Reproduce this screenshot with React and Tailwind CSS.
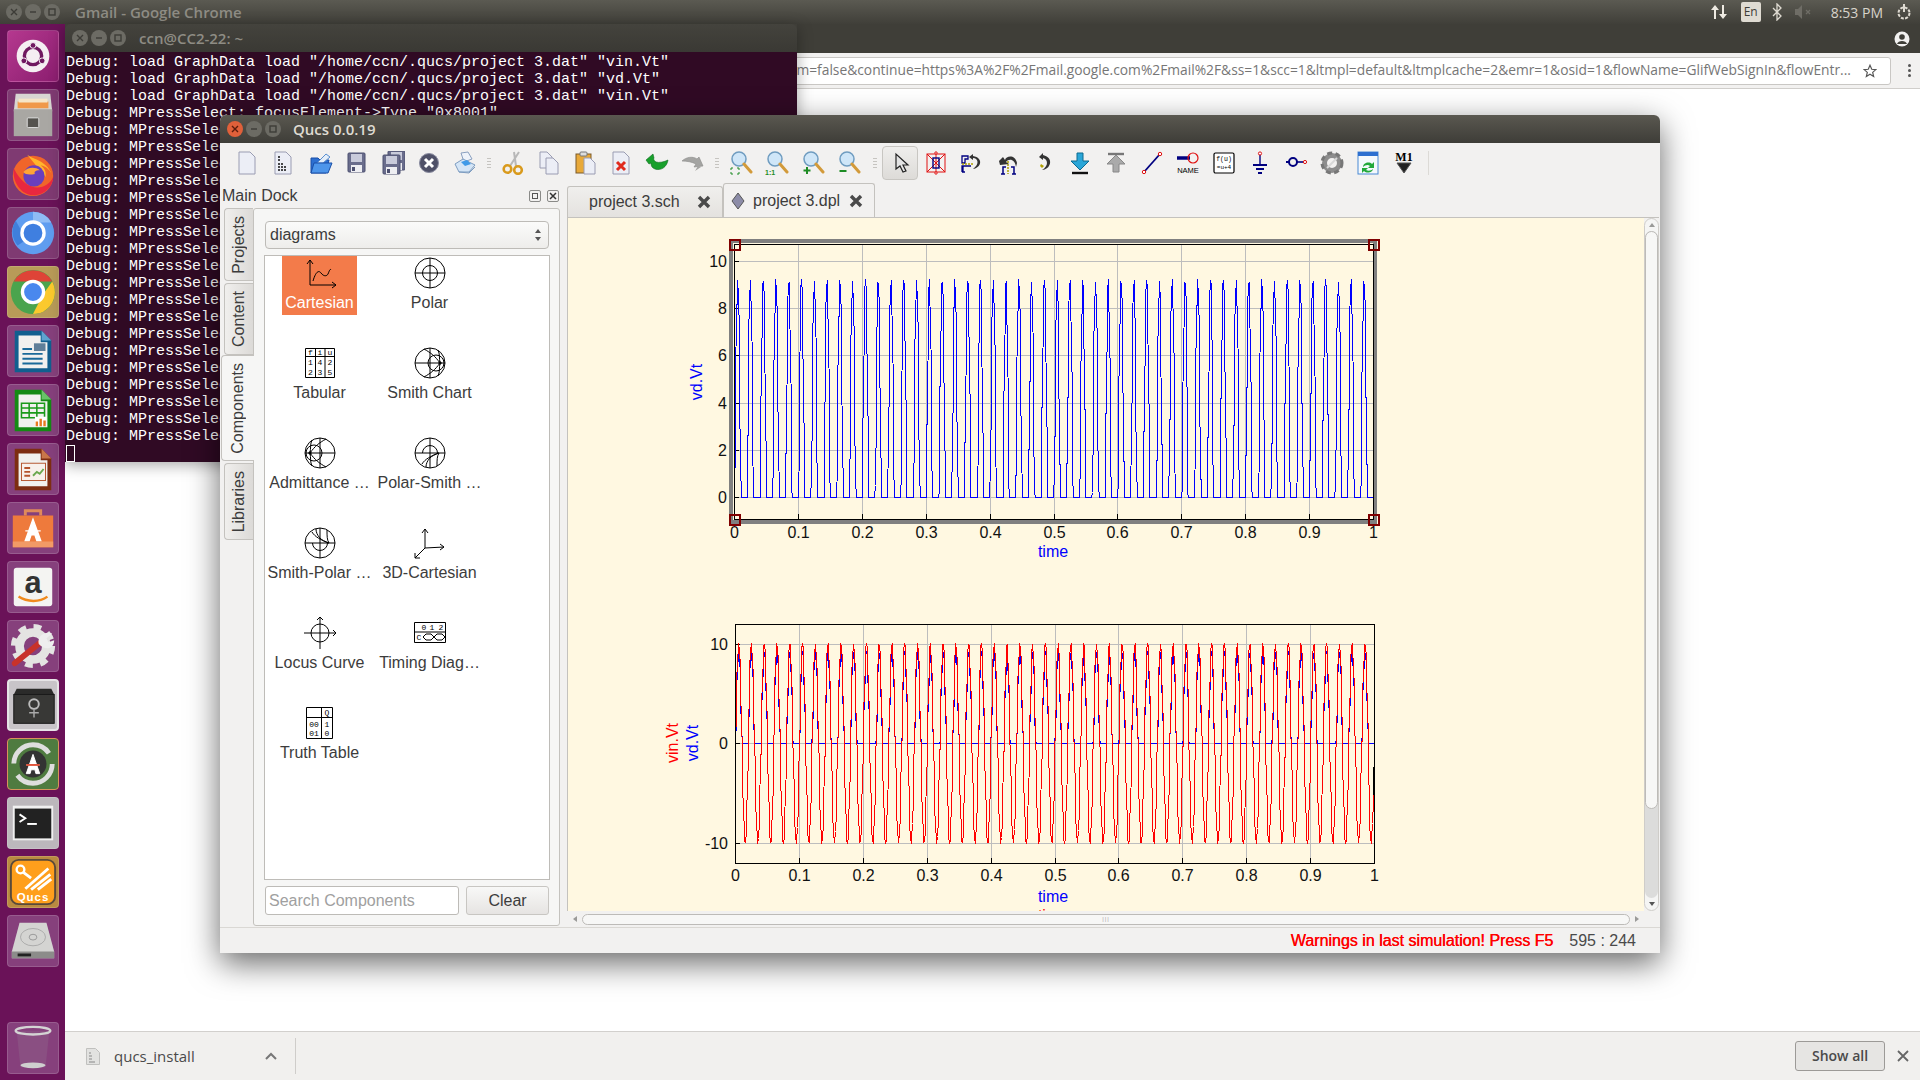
import React from 'react';

// ── Debug output in the terminal behind the Qucs window ──────────────────────
const TERMINAL_LINES = [
  'Debug: load GraphData load "/home/ccn/.qucs/project 3.dat" "vin.Vt"',
  'Debug: load GraphData load "/home/ccn/.qucs/project 3.dat" "vd.Vt"',
  'Debug: load GraphData load "/home/ccn/.qucs/project 3.dat" "vin.Vt"',
  'Debug: MPressSelect: focusElement->Type "0x8001"',
  ...Array(19).fill('Debug: MPressSelect: focusElement->Type "0x8001"'),
];

const URL_TEXT =
  'm=false&continue=https%3A%2F%2Fmail.google.com%2Fmail%2F&ss=1&scc=1&ltmpl=default&ltmplcache=2&emr=1&osid=1&flowName=GlifWebSignIn&flowEntr...';

// ── Launcher icons ───────────────────────────────────────────────────────────
const Tile = ({ bg, ring, children }) => (
  <div className={`w-[52px] h-[52px] rounded-[4px] shrink-0 ${bg} ${ring ?? 'border border-white/15'}`}>
    <svg width="50" height="50" viewBox="0 0 52 52" fill="none">{children}</svg>
  </div>
);

const DocIcon = ({ edge, fold, children }) => (
  <>
    <path d="M7 5h28l10 10v33H7z" fill={edge} />
    <path d="M35 5l10 10H35z" fill={fold} />
    <path d="M11 10h23v7h7v27H11z" fill="#f1f1ef" />
    {children}
  </>
);

const Launcher = () => (
  <div className="w-[65px] shrink-0 bg-[#6a1258] flex flex-col items-center gap-[7px] pt-[6px] pb-[6px]">
    <Tile bg="bg-gradient-to-br from-[#b5388f] to-[#8b1d6f]">
      <circle cx="26" cy="26" r="17" fill="#f4eef2" />
      <circle cx="26" cy="26" r="9" stroke="#6f1860" strokeWidth="3.5" />
      <circle cx="26" cy="15" r="3" fill="#6f1860" stroke="#f4eef2" />
      <circle cx="16.5" cy="31" r="3" fill="#6f1860" stroke="#f4eef2" />
      <circle cx="35.5" cy="31" r="3" fill="#6f1860" stroke="#f4eef2" />
    </Tile>
    <Tile bg="bg-[#7f3a72]">
      <path d="M8 4h36l2 18H6z" fill="#d8d6d2" />
      <path d="M10 12h32v7H10z" fill="#f0994a" />
      <path d="M11 9h30v4H11z" fill="#f6e6c8" />
      <rect x="6" y="20" width="40" height="28" fill="#a9a7a3" />
      <rect x="20" y="29" width="12" height="10" rx="1" fill="#55534f" stroke="#ddd" />
    </Tile>
    <Tile bg="bg-[#7f3a72]">
      <circle cx="26" cy="28" r="21" fill="#f0652a" />
      <path d="M20 6c6 5 22 6 27 24-2-8-8-12-13-13 4 3 6 7 5 12z" fill="#ffb52c" />
      <path d="M6 20c-2 14 8 28 20 28 14 0 21-11 21-19-6 14-28 18-41-9z" fill="#e9283f" />
      <circle cx="27" cy="28" r="11" fill="#6a3fbd" />
      <path d="M16 24c4-5 12-6 17-2-5 0-6 2-5 4-5 1-10 1-12-2z" fill="#ffa436" />
    </Tile>
    <Tile bg="bg-[#7f3a72]">
      <circle cx="26" cy="26" r="22" fill="#5f9df0" />
      <path d="M26 4a22 22 0 0 1 19 11H26z" fill="#8fbcf5" />
      <path d="M8 13l11 20 -9 6a22 22 0 0 1-2-26z" fill="#3f7fdc" />
      <circle cx="26" cy="26" r="11.5" fill="#3f7fe0" stroke="#fff" strokeWidth="3.5" />
    </Tile>
    <Tile bg="bg-[#b89b58]">
      <circle cx="26" cy="26" r="23" fill="#4aa44d" />
      <path d="M6 15a23 23 0 0 1 40 0H26z" fill="#de4437" />
      <path d="M46 15a23 23 0 0 1-20 34l10-20z" fill="#fbc92d" />
      <circle cx="26" cy="26" r="11" fill="#4a88ee" stroke="#fff" strokeWidth="3.5" />
    </Tile>
    <Tile bg="bg-[#86407c]">
      <DocIcon edge="#115f8f" fold="#5ea4cf">
        <path d="M15 24h10M15 29h21M15 34h21M15 39h21" stroke="#1a6a9a" strokeWidth="2" />
        <rect x="27" y="18" width="12" height="8" fill="#5f7f99" />
      </DocIcon>
    </Tile>
    <Tile bg="bg-[#86407c]">
      <DocIcon edge="#148a14" fold="#68c468">
        <path d="M14 19h24v15H14zM14 24h24M14 29h24M22 19v15M30 19v15" stroke="#1a9a1a" strokeWidth="1.6" />
        <rect x="28" y="33" width="12" height="10" fill="#fff" />
        <path d="M30 43v-5M34 43v-8M38 43v-6" stroke="#e87a20" strokeWidth="2.5" />
      </DocIcon>
    </Tile>
    <Tile bg="bg-[#86407c]">
      <DocIcon edge="#7d2d12" fold="#c9764a">
        <rect x="14" y="20" width="25" height="18" fill="#f8f1ec" stroke="#b4532c" />
        <path d="M17 25h6M17 29h6M17 33h6" stroke="#b4532c" strokeWidth="2" />
        <path d="M26 33l4-4 3 2 4-5" stroke="#6aa84f" strokeWidth="2" />
      </DocIcon>
    </Tile>
    <Tile bg="bg-[#86407c]">
      <path d="M18 13v-5h16v5" stroke="#e08a5a" strokeWidth="3" />
      <path d="M5 13h42v33H5z" fill="#ee7a3c" />
      <path d="M5 40h42v6H5z" fill="#f29a66" />
      <path d="M26 17l-8 22h4l2-6h4l2 6h4zM18 29h16" fill="#fff" stroke="#fff" strokeWidth="1.5" />
    </Tile>
    <Tile bg="bg-[#86407c]">
      <rect x="6" y="6" width="40" height="40" rx="3" fill="#f4f4f2" />
      <text x="26" y="32" textAnchor="middle" fontFamily="Liberation Sans, sans-serif" fontWeight="700" fontSize="32" fill="#333">a</text>
      <path d="M11 36c9 6 22 6 30 0" stroke="#f08a1d" strokeWidth="2.5" />
    </Tile>
    <Tile bg="bg-[#86407c]">
      <circle cx="26" cy="26" r="14" stroke="#e4e4e2" strokeWidth="9" />
      <circle cx="26" cy="26" r="20" stroke="#e4e4e2" strokeWidth="6" strokeDasharray="8 7.7" />
      <path d="M7 44L34 22" stroke="#c8322a" strokeWidth="6" strokeLinecap="round" />
      <path d="M32 24c-2-8 6-14 14-11l-6 5 2 4 6-2c0 8-8 12-16 4z" fill="#eee" />
    </Tile>
    <Tile bg="bg-[#c8c4c8]" ring="border-2 border-[#e6e4e6]">
      <path d="M8 8h36l3 6v30H5V14z" fill="#2b2b2a" />
      <rect x="5" y="14" width="42" height="30" fill="#383836" stroke="#1a1a1a" />
      <circle cx="26" cy="24" r="5" fill="none" stroke="#bbb" strokeWidth="2" />
      <path d="M26 29v9M21 33h10" stroke="#aaa" strokeWidth="1.5" />
    </Tile>
    <Tile bg="bg-[#4f7b40]" ring="border border-[#d9925a]">
      <circle cx="26" cy="26" r="20" stroke="#dedede" strokeWidth="5" strokeDasharray="50 13" />
      <circle cx="26" cy="26" r="14" fill="#333" />
      <path d="M26 16l-7 20h4l1-4h4l1 4h4zM19 27h14" fill="#fff" stroke="#fff" />
      <path d="M19 27h14" stroke="#e0533a" strokeWidth="2" />
    </Tile>
    <Tile bg="bg-[#bcb8bc]">
      <rect x="5" y="8" width="42" height="36" fill="#f0f0f0" />
      <rect x="7" y="11" width="38" height="31" fill="#222" />
      <path d="M12 17l6 4-6 4" stroke="#fff" strokeWidth="2" />
      <path d="M20 27h10" stroke="#fff" strokeWidth="2" />
    </Tile>
    <Tile bg="bg-[#b98a40]">
      <rect x="3" y="3" width="46" height="46" rx="8" fill="#ff9f1c" stroke="#5a4a3a" strokeWidth="2" />
      <circle cx="13" cy="13" r="4" stroke="#fff" strokeWidth="2.5" />
      <path d="M16 16l8 6M18 33L42 12M24 34L44 18M31 34l14-11" stroke="#fff" strokeWidth="3" />
      <text x="26" y="46" textAnchor="middle" fontFamily="Liberation Sans, sans-serif" fontWeight="700" fontSize="12" letterSpacing="1" fill="#fff">Qucs</text>
    </Tile>
    <Tile bg="bg-[#86407c]">
      <path d="M12 7h28l8 30v7H4v-7z" fill="#d4d4d2" />
      <path d="M4 37h44v7H4z" fill="#8c8c8a" />
      <path d="M10 39h14v3H10z" fill="#222" />
      <ellipse cx="26" cy="22" rx="13" ry="9" stroke="#aaa" />
      <ellipse cx="26" cy="22" rx="4" ry="3" stroke="#999" />
    </Tile>
    <div className="mt-auto">
      <Tile bg="bg-[#86407c]">
        <path d="M9 8h34l-4 38H13z" fill="#8a4f82" />
        <ellipse cx="26" cy="8" rx="18" ry="4" stroke="#d4d4d4" strokeWidth="2.5" />
        <ellipse cx="26" cy="44" rx="13" ry="3" fill="#cfcfcf" />
      </Tile>
    </div>
  </div>
);

// ── Window decoration ────────────────────────────────────────────────────────
const WinBtn = ({ kind, red }) => (
  <div className={`w-[16px] h-[16px] rounded-full flex items-center justify-center ${red ? 'bg-[#e0603a]' : 'bg-[#6c6b64]'}`}>
    <svg width="8" height="8" viewBox="0 0 8 8" stroke={red ? '#5a1c0c' : '#3d3c37'} strokeWidth="1.4" fill="none">
      {kind === 'x' && <path d="M1 1l6 6M7 1L1 7" />}
      {kind === 'min' && <path d="M1 4h6" />}
      {kind === 'max' && <rect x="1" y="1" width="6" height="6" />}
    </svg>
  </div>
);

const WinBtns = ({ red, gap }) => (
  <div className={`flex items-center ${gap}`}>
    <WinBtn kind="x" red={red} />
    <WinBtn kind="min" />
    <WinBtn kind="max" />
  </div>
);

// ── Qucs toolbar icons ───────────────────────────────────────────────────────
const Ic = ({ children }) => (
  <div className="w-9 flex justify-center">
    <svg width="24" height="24" viewBox="0 0 24 24" fill="none">{children}</svg>
  </div>
);

const Page = ({ x = 4, y = 1, w = 16, h = 22 }) => (
  <path d={`M${x} ${y}h${w - 5}l5 5v${h - 5}h-${w}z`} fill="#eceef6" stroke="#9a9cb2" />
);

const Handle = ({ w }) => (
  <div className={`${w} flex flex-col gap-[2px] items-center`}>
    <span className="w-[4px] h-px bg-[#c6c4c0]" />
    <span className="w-[4px] h-px bg-[#c6c4c0]" />
    <span className="w-[4px] h-px bg-[#c6c4c0]" />
    <span className="w-[4px] h-px bg-[#c6c4c0]" />
  </div>
);

const Floppy = ({ dx = 0, dy = 0 }) => (
  <g transform={`translate(${dx} ${dy})`}>
    <rect x="3" y="2" width="17" height="19" rx="1" fill="#6a6d8c" stroke="#4d5070" />
    <rect x="6" y="3" width="11" height="8" fill="#c9cbdb" />
    <rect x="6" y="14" width="11" height="7" fill="#eeeef2" />
    <rect x="7" y="16" width="3" height="4" fill="#4d5070" />
  </g>
);

const ZoomIc = ({ children }) => (
  <Ic>
    <circle cx="10" cy="8" r="7" fill="#cfe6f8" stroke="#6f9cc0" strokeWidth="1.5" />
    <path d="M15 13l7 8" stroke="#d29a3a" strokeWidth="3" strokeLinecap="round" />
    {children}
  </Ic>
);

const Toolbar = () => (
  <div className="h-[42px] shrink-0 flex items-center pl-[9px] pb-[2px]">
    <Ic><Page /></Ic>
    <Ic>
      <Page />
      <path d="M7 6h2M7 9h2M7 13h5M7 16h9M7 19h9" stroke="#111" strokeWidth="1.3" strokeDasharray="2 1" />
    </Ic>
    <div className="w-[2px]" />
    <Ic>
      <path d="M2 7h7l2 2h9l-3 13H2z" fill="#2d6fd0" stroke="#1a4fa8" />
      <path d="M8 12L17 3l4 3-7 6z" fill="#e4eef9" stroke="#5a8fd0" />
      <path d="M5 12h18l-4 10H2z" fill="#4d95ea" stroke="#1a4fa8" />
    </Ic>
    <Ic><Floppy /></Ic>
    <Ic><Floppy dx="4" dy="-2" /><Floppy dx="-1" dy="2" /></Ic>
    <Ic>
      <circle cx="12" cy="12" r="9.5" fill="#4f5168" stroke="#8a8ca0" />
      <path d="M8 8l8 8M16 8l-8 8" stroke="#fff" strokeWidth="3" />
    </Ic>
    <Ic>
      <path d="M8 2l7-1 4 7-8 3z" fill="#eef3fa" stroke="#8aa0c0" />
      <path d="M2 13l8-5 12 6-6 7H6z" fill="#d4e5f6" stroke="#7d9cc0" />
      <path d="M8 11l6-2 4 4-6 2z" fill="#3f9ae8" />
      <path d="M6 21l10 1 6-6" stroke="#7d9cc0" />
    </Ic>
    <Handle w="w-[12px]" />
    <Ic>
      <path d="M9 15L18 1M15 15L13 1" stroke="#b8b8b8" strokeWidth="2" />
      <circle cx="6.5" cy="18" r="3.8" stroke="#d99a1c" strokeWidth="2.6" />
      <circle cx="17" cy="19" r="3.8" stroke="#d99a1c" strokeWidth="2.6" />
    </Ic>
    <Ic><Page x={3} y={1} w={12} h={16} /><Page x={9} y={7} w={12} h={16} /></Ic>
    <Ic>
      <rect x="3" y="3" width="15" height="19" fill="#e8a93a" stroke="#7a5a2a" />
      <rect x="7" y="1" width="7" height="4" rx="1" fill="#ddd" stroke="#777" />
      <Page x={11} y={7} w={11} h={16} />
    </Ic>
    <Ic>
      <Page />
      <path d="M8 11l8 8M16 11l-8 8" stroke="#e02a1e" strokeWidth="3" />
    </Ic>
    <Ic>
      <path d="M1 9l7-6 1 4c-1 1 0 3 2 4 3 1 8 0 12-2-1 7-7 11-13 9-3-1-4-3-4-6l-2 1z" fill="#18a02c" stroke="#0c6a1c" strokeWidth="0.6" />
    </Ic>
    <Ic>
      <path d="M1 10c4-4 11-5 15-2l2-2 4 9-9 1 2-3c-4-2-9-3-14-3z" fill="#a4a4a2" stroke="#8a8a88" strokeWidth="0.6" />
      <path d="M14 20l3-5 3 1z" fill="#a4a4a2" />
    </Ic>
    <Handle w="w-[12px]" />
    <ZoomIc><path d="M2 19v-2h2M8 17h2v2M2 21v2h2M8 23h2v-2" stroke="#1e8c24" /></ZoomIc>
    <ZoomIc><text x="0" y="24" fontSize="7" fontWeight="700" fontFamily="Liberation Sans, sans-serif" fill="#1e8c24">1:1</text></ZoomIc>
    <ZoomIc><path d="M6 16v7M2.5 19.5h7" stroke="#1e8c24" strokeWidth="2" /></ZoomIc>
    <ZoomIc><path d="M2.5 20h7" stroke="#1e8c24" strokeWidth="2" /></ZoomIc>
    <Handle w="w-[15px]" />

    <div className="w-9 h-[34px] flex items-center justify-center rounded-[4px] border border-[#c8c6c2] bg-gradient-to-b from-[#efeeec] to-[#dddbd8]">
      <svg width="24" height="24" viewBox="0 0 24 24" fill="none">
        <path d="M8 3v15l4-3 3 6 3-1-3-6h5z" fill="#e4e4e4" stroke="#222" strokeWidth="1.2" />
      </svg>
    </div>
    <Ic>
      <rect x="3" y="3" width="18" height="18" stroke="#e01010" />
      <path d="M3 3l18 18M21 3L3 21M12 1v22" stroke="#e01010" />
      <rect x="9" y="7" width="6" height="10" stroke="#000080" strokeWidth="1.4" />
      <circle cx="12" cy="2" r="1.2" stroke="#e01010" fill="#fff" />
      <circle cx="12" cy="22" r="1.2" stroke="#e01010" fill="#fff" />
    </Ic>
    <Ic>
      <path d="M2 5h6v3H5v4h-3zM2 21v-6h9M5 21h-3M3 15v6" stroke="#000080" strokeWidth="1.3" />
      <path d="M2 13h12" stroke="#b0a000" strokeWidth="1.5" strokeDasharray="2 1" />
      <path d="M13 3l-4 3 4 3V7c5 0 7 6 0 11 8-1 11-11 0-13z" fill="#333" />
    </Ic>
    <Ic>
      <path d="M7 23v-7h3M18 23v-7h-3M5 23h4M16 23h4" stroke="#000080" strokeWidth="1.5" />
      <path d="M12 10v13" stroke="#b0a000" strokeWidth="1.5" strokeDasharray="2 1" />
      <path d="M3 10l4-4 2 3c1-4 10-6 12 3l-1 4c-1-8-7-9-10-5l3 2-9 1z" fill="#333" />
    </Ic>
    <Ic>
      <path d="M11 2L7 6l4 3V7c5 1 6 8-1 12 8 0 13-12 1-15z" fill="#333" />
      <path d="M9 13l3 2-2 2-2-2z" fill="#b0a000" />
    </Ic>
    <Ic>
      <path d="M9 2h6v8h6l-9 9-9-9h6z" fill="#2aa6d8" stroke="#0d6a90" />
      <path d="M4 22h16" stroke="#111" strokeWidth="2.4" />
    </Ic>
    <Ic>
      <path d="M4 3h16" stroke="#777" strokeWidth="2.4" />
      <path d="M9 21h6v-8h6l-9-9-9 9h6z" fill="#aaa" stroke="#888" />
    </Ic>
    <Ic>
      <path d="M4 21L20 3" stroke="#000080" strokeWidth="1.8" />
      <circle cx="4" cy="21" r="1.7" fill="#fff" stroke="#e01010" />
      <circle cx="20" cy="3" r="1.7" fill="#fff" stroke="#e01010" />
    </Ic>
    <Ic>
      <path d="M1 7h13" stroke="#000080" strokeWidth="3.5" />
      <circle cx="17" cy="7" r="5" fill="none" stroke="#e01010" strokeWidth="1.2" />
      <text x="12" y="22" textAnchor="middle" fontSize="7.5" fontFamily="Liberation Sans, sans-serif" fill="#000">NAME</text>
    </Ic>
    <Ic>
      <rect x="2" y="2" width="20" height="20" rx="1.5" fill="#fff" stroke="#000" strokeWidth="1.2" />
      <text x="12" y="10" textAnchor="middle" fontSize="6.5" fontFamily="Liberation Mono, monospace" fill="#000">f(u)</text>
      <text x="12" y="18" textAnchor="middle" fontSize="6" fontFamily="Liberation Mono, monospace" fill="#000">=u+4</text>
    </Ic>
    <Ic>
      <path d="M12 3v11" stroke="#000080" strokeWidth="1.4" />
      <circle cx="12" cy="2.5" r="1.6" fill="#fff" stroke="#e01010" />
      <path d="M5 14h14M8 18h8M10 22h4" stroke="#000080" strokeWidth="2" />
    </Ic>
    <Ic>
      <circle cx="9" cy="11" r="4" stroke="#000080" strokeWidth="2" />
      <path d="M13 11h7" stroke="#000080" strokeWidth="1.6" />
      <path d="M2 11h3" stroke="#000080" strokeWidth="2" />
      <circle cx="21" cy="11" r="1.6" fill="#fff" stroke="#e01010" />
    </Ic>
    <Ic>
      <circle cx="12" cy="12" r="7.5" stroke="#8d8d8d" strokeWidth="5" />
      <circle cx="12" cy="12" r="10" stroke="#777" strokeWidth="3" strokeDasharray="5 3.4" />
      <path d="M7 17L17 7" stroke="#d8d8d8" strokeWidth="2" />
    </Ic>
    <Ic>
      <rect x="2" y="1" width="20" height="22" fill="#f4f8fc" stroke="#4a8ad4" />
      <rect x="2" y="1" width="20" height="4" fill="#2d6fd0" />
      <path d="M7 16c0-4 6-6 9-3l2-2v6h-6l2-2c-2-2-5-1-7 1z" fill="#22a83a" />
      <path d="M17 18c0 3-6 5-9 2l-2 2v-5h6l-2 2c2 1 5 1 7-1z" fill="#22a83a" />
    </Ic>
    <Ic>
      <text x="12" y="10" textAnchor="middle" fontSize="12" fontWeight="700" fontFamily="Liberation Serif, serif" fill="#000">M1</text>
      <path d="M5 12h14l-7 10z" fill="#222" stroke="#555" />
    </Ic>
    <div className="w-px h-[24px] bg-[#dcdad6] ml-[6px]" />
  </div>
);

// ── Component palette icons ──────────────────────────────────────────────────
const Sv = ({ children }) => (
  <svg width="32" height="32" viewBox="0 0 32 32" fill="none" stroke="#000" strokeWidth="1">{children}</svg>
);

const Disc = () => (
  <>
    <circle cx="16" cy="16" r="15" />
    <path d="M1 16h30" />
  </>
);

const SmithArcs = ({ flip }) => (
  <g transform={flip ? 'rotate(180 16 16)' : undefined}>
    <path d="M16 1v30" />
    <circle cx="22" cy="16" r="8" />
    <path d="M26 16C21 9 17 6 10 2M26 16C21 23 17 26 10 30M26 16C25 11 26 7 24 3M26 16C25 21 26 25 24 29" />
    <circle cx="26" cy="16" r="1.2" fill="#000" />
  </g>
);

const DIAGRAMS = [
  {
    label: 'Cartesian',
    active: true,
    icon: (
      <Sv>
        <path d="M6 3v25h26M3 7l3-4 3 4M28 25l4 3-4 3" />
        <path d="M9 24c2-7 5-12 8-8s6 3 7 1 2-6 3-4" />
      </Sv>
    ),
  },
  { label: 'Polar', icon: <Sv><Disc /><path d="M16 1v30" /><circle cx="16" cy="16" r="7.5" /></Sv> },
  {
    label: 'Tabular',
    icon: (
      <svg width="32" height="32" viewBox="0 0 32 32" fill="none" stroke="#000">
        <path d="M1.5 1.5h29v29h-29zM1.5 9.5h29M11.5 1.5v29M21 1.5v29" />
        <g fontFamily="Liberation Mono, monospace" fontSize="8" fill="#000" stroke="none" textAnchor="middle">
          <text x="6.5" y="8">f</text><text x="16" y="8">i</text><text x="26" y="8">u</text>
          <text x="6.5" y="18">1</text><text x="16" y="18">4</text><text x="26" y="18">2</text>
          <text x="6.5" y="28">2</text><text x="16" y="28">3</text><text x="26" y="28">5</text>
        </g>
      </svg>
    ),
  },
  { label: 'Smith Chart', icon: <Sv><Disc /><SmithArcs /></Sv> },
  { label: 'Admittance …', icon: <Sv><Disc /><SmithArcs flip /></Sv> },
  {
    label: 'Polar-Smith …',
    icon: (
      <Sv>
        <Disc />
        <path d="M16 1v30" />
        <path d="M8.5 16a7.5 7.5 0 0 1 15 0" />
        <path d="M8 27c3-5 9-8 17-11M12 30c0-6 5-12 13-14M23 29c0-6 0-10 2-13" />
      </Sv>
    ),
  },
  {
    label: 'Smith-Polar …',
    icon: (
      <Sv>
        <Disc />
        <path d="M16 1v30" />
        <path d="M8.5 16a7.5 7.5 0 0 0 15 0" />
        <path d="M8 5c3 5 9 8 17 11M12 2c0 6 5 12 13 14M23 3c0 6 0 10 2 13" />
      </Sv>
    ),
  },
  {
    label: '3D-Cartesian',
    icon: (
      <Sv>
        <path d="M11 2v19l19-1M11 21L1 31M8 6l3-4 3 4M26 17l4 3-4 3M1 26v5h5" />
      </Sv>
    ),
  },
  {
    label: 'Locus Curve',
    icon: (
      <Sv>
        <circle cx="16" cy="16" r="9" />
        <path d="M16 0v32M0 16h32M13 3l3-3 3 3M29 13l3 3-3 3" />
      </Sv>
    ),
  },
  {
    label: 'Timing Diag…',
    icon: (
      <svg width="32" height="22" viewBox="0 0 32 22" fill="none" stroke="#000">
        <path d="M.5.5h31v20H.5zM.5 10h31" />
        <g fontFamily="Liberation Mono, monospace" fontSize="8" fill="#000" stroke="none" textAnchor="middle">
          <text x="10" y="8">0</text><text x="18" y="8">1</text><text x="27" y="8">2</text><text x="5" y="18">C</text>
        </g>
        <path d="M9 15l3-3h5l3 3-3 3h-5zM20 15l3-3h5l3 3-3 3h-5z" />
      </svg>
    ),
  },
  {
    label: 'Truth Table',
    icon: (
      <svg width="28" height="32" viewBox="0 0 28 32" fill="none" stroke="#000">
        <path d="M.5.5h26v31H.5zM.5 10.5h26M15.5.5v31" />
        <g fontFamily="Liberation Mono, monospace" fontSize="8" fill="#000" stroke="none" textAnchor="middle">
          <text x="21" y="8">Q</text>
          <text x="8" y="20">00</text><text x="21" y="20">1</text>
          <text x="8" y="29">01</text><text x="21" y="29">0</text>
        </g>
      </svg>
    ),
  },
];

const DiagramItem = ({ item }) => (
  <div className="h-[90px] flex flex-col items-center">
    <div className={`w-[75px] h-[59px] flex flex-col items-center ${item.active ? 'bg-[#f37b4a]' : ''}`}>
      <div className="h-[33px] pt-px flex items-center justify-center">{item.icon}</div>
      <div className={`mt-[2px] h-6 leading-6 whitespace-nowrap ${item.active ? 'text-white' : 'text-[#3c3c3c]'}`}>
        {item.label}
      </div>
    </div>
  </div>
);

const DOCK_TABS = [
  { label: 'Projects', h: 'h-[73px]' },
  { label: 'Content', h: 'h-[72px]', mt: 'mt-[2px]' },
  { label: 'Components', h: 'h-[106px]', active: true },
  { label: 'Libraries', h: 'h-[77px]', mt: 'mt-[2px]' },
];

const MainDock = () => (
  <div className="w-[342px] shrink-0 flex flex-col">
    <div className="h-[23px] flex items-center justify-between pl-[2px] pr-px pb-px text-[#3c3c3c]">
      <span>Main Dock</span>
      <div className="flex gap-[6px] pr-[2px]">
        <span className="w-[12px] h-[12px] rounded-[2px] border border-[#8a8a88] flex items-center justify-center">
          <span className="w-[6px] h-[6px] border border-[#555]" />
        </span>
        <span className="w-[12px] h-[12px] rounded-[2px] border border-[#8a8a88] flex items-center justify-center">
          <svg width="8" height="8" viewBox="0 0 8 8" stroke="#333" strokeWidth="1.5"><path d="M1 1l6 6M7 1L1 7" /></svg>
        </span>
      </div>
    </div>
    <div className="flex flex-1 pl-[3px] pr-[2px] pb-px">
      <div className="w-[30px] shrink-0 flex flex-col">
        {DOCK_TABS.map(tab => (
          <div
            key={tab.label}
            className={`${tab.h} ${tab.mt ?? ''} flex items-center justify-center border border-r-0 border-[#c4c2be] rounded-l-[4px] ${
              tab.active ? 'bg-[#f6f6f5] -ml-[2px] relative z-10 -mr-px' : 'bg-gradient-to-r from-[#f0efed] to-[#dcdad7] ml-px'
            }`}
          >
            <span className="[writing-mode:vertical-rl] rotate-180 text-[#3c3c3c]">{tab.label}</span>
          </div>
        ))}
      </div>
      <div className="flex-1 bg-[#f6f6f5] border border-[#c4c2be] rounded-[3px] pl-[10px] pr-[9px] pt-[12px] pb-[10px] flex flex-col">
        <div className="mx-px h-[28px] shrink-0 rounded-[4px] border border-[#bdbbb7] bg-gradient-to-b from-[#fbfbfa] to-[#eeedeb] flex items-center justify-between pl-[4px] pr-[6px] text-[#3c3c3c]">
          <span>diagrams</span>
          <svg width="8" height="14" viewBox="0 0 8 14" fill="#555"><path d="M4 1l3 4H1zM4 13l3-4H1z" /></svg>
        </div>
        <div className="mt-[6px] flex-1 bg-white border border-[#bebcb8] grid grid-cols-[109px_111px] content-start">
          {DIAGRAMS.map(item => <DiagramItem key={item.label} item={item} />)}
        </div>
        <div className="mt-[6px] mx-px flex gap-[7px]">
          <div className="w-[194px] h-[29px] rounded-[3px] border border-[#bdbbb7] bg-white pl-[3px] leading-[27px] text-[#a0a0a0]">
            Search Components
          </div>
          <div className="w-[83px] h-[29px] rounded-[3px] border border-[#c8c6c2] bg-gradient-to-b from-[#f8f8f7] to-[#e6e4e2] text-center leading-[27px] text-[#3c3c3c]">
            Clear
          </div>
        </div>
      </div>
    </div>
  </div>
);

// ── Plots ────────────────────────────────────────────────────────────────────
// The simulator's time step is not a round fraction of the 50 Hz period,
// which is what gives the uneven staircase on each half wave.
const TIME_STEP = 0.00103;

const trace = (fn, x0, w, y0, scale) => {
  let d = '';
  for (let t = 0, i = 0; t <= 1; t += TIME_STEP, i++) {
    const x = Math.round(x0 + t * w) + 0.5;
    const y = Math.round(y0 - fn(t) * scale) + 0.5;
    d += `${i === 0 ? 'M' : 'L'}${x} ${y}`;
  }
  return d;
};

const vin = t => 10 * Math.sin(2 * Math.PI * 50 * t);
const vd = t => Math.max(0, vin(t) - 0.8);

const XTICKS = ['0', '0.1', '0.2', '0.3', '0.4', '0.5', '0.6', '0.7', '0.8', '0.9', '1'];

const Plot = ({ left, right, top, bottom, yTicks, labelY }) => {
  const w = right - left;
  return (
    <g fontFamily="Liberation Sans, sans-serif" fontSize="16" fill="#111">
      {XTICKS.map((label, i) => {
        const x = Math.round(left + (i * w) / 10) + 0.5;
        return (
          <g key={label}>
            <path d={`M${x} ${top}V${bottom}`} stroke="#bdbdbd" shapeRendering="crispEdges" />
            <path d={`M${x} ${bottom - 5}V${bottom}`} stroke="#000" shapeRendering="crispEdges" />
            <text x={x} y={labelY} textAnchor="middle" stroke="none">{label}</text>
          </g>
        );
      })}
      {yTicks.map(tick => {
        const y = Math.round(tick.y) + 0.5;
        return (
          <g key={tick.label}>
            <path d={`M${left} ${y}H${right}`} stroke="#bdbdbd" shapeRendering="crispEdges" />
            <path d={`M${left} ${y}h5`} stroke="#000" shapeRendering="crispEdges" />
            <text x={left - 7} y={y + 5} textAnchor="end" stroke="none">{tick.label}</text>
          </g>
        );
      })}
    </g>
  );
};

const PlotFrame = ({ left, right, top, bottom }) => (
  <rect x={left + 0.5} y={top + 0.5} width={right - left} height={bottom - top} fill="none" stroke="#000" shapeRendering="crispEdges" />
);

const Handles = ({ pts }) => pts.map(([x, y]) => (
  <rect key={`${x}-${y}`} x={x - 4.5} y={y - 4.5} width="10" height="10" fill="none" stroke="#800000" strokeWidth="2" shapeRendering="crispEdges" />
));

const Canvas = () => (
  <svg width="1077" height="693" viewBox="568 218 1077 693" className="block" fill="none">
    {/* top diagram, selected */}
    <rect x="731" y="241" width="644" height="281" stroke="#808080" strokeWidth="4" shapeRendering="crispEdges" />
    <Plot
      left={734} right={1373} top={244} bottom={519} labelY={538}
      yTicks={[
        { label: '10', y: 260.7 }, { label: '8', y: 307.7 }, { label: '6', y: 355.3 },
        { label: '4', y: 402.6 }, { label: '2', y: 450 }, { label: '0', y: 497.3 },
      ]}
    />
    <path d={trace(vd, 734, 639, 497, 23.66)} stroke="#0000ff" shapeRendering="crispEdges" />
    <PlotFrame left={734} right={1373} top={244} bottom={519} />
    <Handles pts={[[734, 244], [1373, 244], [734, 519], [1373, 519]]} />
    <g fontFamily="Liberation Sans, sans-serif" fontSize="16" fill="#0000ff">
      <text transform="translate(702 382) rotate(-90)" textAnchor="middle">vd.Vt</text>
      <text x="1053" y="557" textAnchor="middle">time</text>
    </g>

    {/* bottom diagram */}
    <Plot
      left={735} right={1374} top={624} bottom={863} labelY={881}
      yTicks={[{ label: '10', y: 644 }, { label: '0', y: 743 }, { label: '-10', y: 843 }]}
    />
    <path d={trace(vd, 735, 639, 743, 10)} stroke="#0000ff" shapeRendering="crispEdges" />
    <path d={trace(vin, 735, 639, 743, 10)} stroke="#ff0000" shapeRendering="crispEdges" />
    <PlotFrame left={735} right={1374} top={624} bottom={863} />
    <path d="M1374 767v28" stroke="#000" strokeWidth="2" />
    <g fontFamily="Liberation Sans, sans-serif" fontSize="16">
      <text transform="translate(678 743) rotate(-90)" textAnchor="middle" fill="#ff0000">vin.Vt</text>
      <text transform="translate(698 743) rotate(-90)" textAnchor="middle" fill="#0000ff">vd.Vt</text>
      <text x="1053" y="902" textAnchor="middle" fill="#0000ff">time</text>
      <text x="1053" y="921" textAnchor="middle" fill="#ff0000">time</text>
    </g>
  </svg>
);

const DocTab = ({ label, active, diamond }) => (
  <div
    className={`shrink-0 flex items-center border border-b-0 border-[#c4c2be] rounded-t-[3px] text-[#3c3c3c] ${
      active ? 'w-[152px] h-[34px] -mt-[2px] bg-[#f2f1f0] pl-[6px]' : 'w-[156px] h-[31px] mt-px bg-gradient-to-b from-[#f0efed] to-[#e4e2df] pl-[21px]'
    }`}
  >
    {diamond && (
      <svg width="16" height="18" viewBox="0 0 16 18" className="mr-[7px]">
        <path d="M8 1l6 8-6 8-6-8z" fill="#8c8ca8" stroke="#555" />
      </svg>
    )}
    <span>{label}</span>
    <svg width="14" height="14" viewBox="0 0 14 14" stroke="#4a4a4a" strokeWidth="3.4" className={active ? 'ml-[9px]' : 'ml-[17px]'}>
      <path d="M2 2l10 10M12 2L2 12" />
    </svg>
  </div>
);

const DocArea = () => (
  <div className="flex-1 min-w-0 flex flex-col">
    <div className="h-[32px] shrink-0 flex">
      <DocTab label="project 3.sch" />
      <DocTab label="project 3.dpl" active diamond />
    </div>
    <div className="flex-1 flex flex-col border-t border-[#c4c2be]">
      <div className="flex flex-1 min-h-0">
        <div className="flex-1 bg-[#fff8e1] border-l border-[#c4c2be] overflow-hidden">
          <Canvas />
        </div>
        {/* vertical scrollbar */}
        <div className="w-[15px] shrink-0 flex flex-col items-center border border-[#cfcdc9] rounded-[8px] bg-[#f5f5f4]">
          <svg width="8" height="12" viewBox="0 0 8 12" fill="#9a9a98" className="shrink-0"><path d="M4 4l3 4H1z" /></svg>
          <div className="w-full flex-1 flex flex-col bg-[#dcdcdb] rounded-[7px]">
            <div className="h-[578px] bg-[#f7f7f6] rounded-[7px] border border-[#bdbbb8]" />
          </div>
          <svg width="8" height="12" viewBox="0 0 8 12" fill="#555" className="shrink-0"><path d="M4 8l3-4H1z" /></svg>
        </div>
      </div>
      <div className="h-[16px] shrink-0 flex items-center pl-[4px] pr-[18px]">
        <svg width="8" height="10" viewBox="0 0 8 10" fill="#9a9a98" className="shrink-0"><path d="M2 5l4-3v6z" /></svg>
        <div className="flex-1 h-[11px] mx-[3px] rounded-[6px] border border-[#bdbbb8] bg-[#f7f7f6] flex items-center justify-center">
          <span className="text-[6px] leading-none text-[#aaa] tracking-[1px]">|||</span>
        </div>
        <svg width="8" height="10" viewBox="0 0 8 10" fill="#9a9a98" className="shrink-0"><path d="M6 5L2 2v6z" /></svg>
      </div>
    </div>
  </div>
);

const QucsWindow = () => (
  <div className="absolute left-[220px] top-[115px] w-[1440px] h-[838px] flex flex-col rounded-t-[6px] bg-[#f2f1f0] font-['Liberation_Sans',sans-serif] text-[16px] shadow-[0_10px_32px_rgba(0,0,0,0.6)]">
    <div className="h-[28px] shrink-0 rounded-t-[6px] bg-gradient-to-b from-[#5a5850] to-[#3e3d38] flex items-center pl-[7px]">
      <WinBtns red gap="gap-[3px]" />
      <span className="ml-[12px] font-['Open_Sans',sans-serif] font-semibold text-[15px] text-[#dfdbd2]">Qucs 0.0.19</span>
    </div>
    <Toolbar />
    <div className="flex-1 flex min-h-0 pr-px">
      <MainDock />
      <div className="w-[5px] shrink-0" />
      <DocArea />
    </div>
    <div className="h-[26px] shrink-0 border-t border-[#dad8d4] flex items-center justify-end pr-[24px]">
      <span className="text-[#ff0000] [text-shadow:0.4px_0_0_#ff0000]">Warnings in last simulation! Press F5</span>
      <span className="ml-[16px] text-[#4a4a4a]">595 : 244</span>
    </div>
  </div>
);

const TerminalWindow = () => (
  <div className="absolute left-[65px] top-[24px] w-[732px] h-[437px] flex flex-col shadow-[0_4px_14px_rgba(0,0,0,0.35)]">
    <div className="h-[28px] shrink-0 bg-gradient-to-b from-[#44433d] to-[#3a3934] rounded-t-[6px] flex items-center pl-[7px]">
      <WinBtns gap="gap-[3px]" />
      <span className="ml-[13px] font-['Open_Sans',sans-serif] font-semibold text-[15px] text-[#8e8c84]">ccn@CC2-22: ~</span>
    </div>
    <div className="flex-1 bg-[#300a24] pl-px pt-[2px] font-['Liberation_Mono',monospace] text-[15px] leading-[17px] text-white whitespace-pre">
      {TERMINAL_LINES.map((line, i) => <div key={i}>{line}</div>)}
      <div className="w-[9px] h-[17px] border border-white" />
    </div>
  </div>
);

// ── Desktop ──────────────────────────────────────────────────────────────────
export default function App() {
  return (
    <div className="relative w-[1920px] h-[1080px] overflow-hidden bg-white flex flex-col">
      {/* panel */}
      <div className="h-[24px] shrink-0 bg-gradient-to-b from-[#5b5a52] to-[#403f39] flex items-center pl-[6px] pr-[7px] font-['Open_Sans',sans-serif]">
        <WinBtns gap="gap-[3px]" />
        <span className="ml-[15px] font-semibold text-[15px] text-[#8f8d85]">Gmail - Google Chrome</span>
        <div className="ml-auto flex items-center text-[#dfdbd2]">
          <svg width="18" height="18" viewBox="0 0 18 18" fill="#eeeae2"><path d="M5 2l4 5H6v9H4V7H1zM13 16l-4-5h3V2h2v9h3z" /></svg>
          <span className="ml-[13px] w-[20px] h-[20px] bg-[#dfdbd2] text-[#3e3d38] rounded-[2px] text-[12px] leading-[20px] text-center">En</span>
          <svg width="12" height="18" viewBox="0 0 12 18" fill="none" stroke="#dfdbd2" strokeWidth="1.3" className="ml-[10px]"><path d="M2 5l8 8-4 4V1l4 4-8 8" /></svg>
          <svg width="20" height="16" viewBox="0 0 20 16" fill="#6f6d66" className="ml-[11px]"><path d="M1 5h3l4-4v14l-4-4H1z" /><path d="M12 6l4 4M16 6l-4 4" stroke="#6f6d66" strokeWidth="1.3" /></svg>
          <span className="ml-[17px] text-[14px] text-[#d8d4cb]">8:53 PM</span>
          <svg width="18" height="18" viewBox="0 0 18 18" fill="none" stroke="#dfdbd2" className="ml-[12px]">
            <circle cx="9" cy="10" r="5.5" strokeWidth="2" strokeDasharray="3 1.3" />
            <path d="M9 1v8" strokeWidth="2" />
          </svg>
        </div>
      </div>

      <div className="flex-1 flex min-h-0">
        <Launcher />

        {/* Chrome */}
        <div className="flex-1 min-w-0 flex flex-col">
          <div className="h-[29px] shrink-0 bg-[#3f3e38] flex items-center justify-end pr-[10px]">
            <svg width="16" height="16" viewBox="0 0 16 16">
              <circle cx="8" cy="8" r="7.5" fill="#f2f1f0" />
              <circle cx="8" cy="6" r="2.8" fill="#3f3e38" />
              <path d="M3 13c1-4 9-4 10 0z" fill="#3f3e38" />
            </svg>
          </div>
          <div className="h-[36px] shrink-0 bg-[#f2f1f0] border-b border-[#d0cecb] flex items-center pr-[9px] font-['Open_Sans',sans-serif]">
            <div className="flex-1 min-w-0 h-[28px] bg-white border border-[#c9c7c4] rounded-[3px] flex items-center justify-end pr-[39px] overflow-hidden">
              <span className="whitespace-nowrap text-[13.8px] text-[#767676]">{URL_TEXT}</span>
            </div>
            <svg width="14" height="14" viewBox="0 0 24 24" fill="none" stroke="#555" strokeWidth="2" className="absolute left-[1863px]">
              <path d="M12 2l3 7 7 .6-5.4 4.8 1.7 7.1L12 17.6l-6.3 3.9 1.7-7.1L2 9.6 9 9z" />
            </svg>
            <div className="ml-[17px] flex flex-col gap-[2px]">
              <span className="w-[3px] h-[3px] rounded-full bg-[#555]" />
              <span className="w-[3px] h-[3px] rounded-full bg-[#555]" />
              <span className="w-[3px] h-[3px] rounded-full bg-[#555]" />
            </div>
          </div>
          <div className="flex-1" />
          {/* download shelf */}
          <div className="h-[49px] shrink-0 bg-[#f1f0ee] border-t border-[#d2d0cd] flex items-center pl-[21px] pr-[11px] font-['Open_Sans',sans-serif]">
            <svg width="14" height="17" viewBox="0 0 14 17">
              <path d="M.5.5h9l4 4v12H.5z" fill="#e2e2e0" stroke="#c0c0be" />
              <path d="M3 5h2M3 8h3M3 11h3M3 14h6" stroke="#888" />
            </svg>
            <span className="ml-[14px] text-[15px] text-[#4a4a4a]">qucs_install</span>
            <svg width="12" height="8" viewBox="0 0 12 8" fill="none" stroke="#777" strokeWidth="2" className="ml-[70px]"><path d="M1 7l5-5 5 5" /></svg>
            <div className="ml-[18px] w-px h-[36px] bg-[#cfcdca]" />
            <div className="ml-auto w-[90px] h-[30px] rounded-[3px] border border-[#9c9a97] bg-[#e6e5e3] text-center leading-[28px] text-[14px] font-semibold text-[#4a4a4a]">
              Show all
            </div>
            <svg width="12" height="12" viewBox="0 0 12 12" stroke="#666" strokeWidth="1.8" className="ml-[12px]"><path d="M1 1l10 10M11 1L1 11" /></svg>
          </div>
        </div>
      </div>

      <TerminalWindow />
      <QucsWindow />
    </div>
  );
}
